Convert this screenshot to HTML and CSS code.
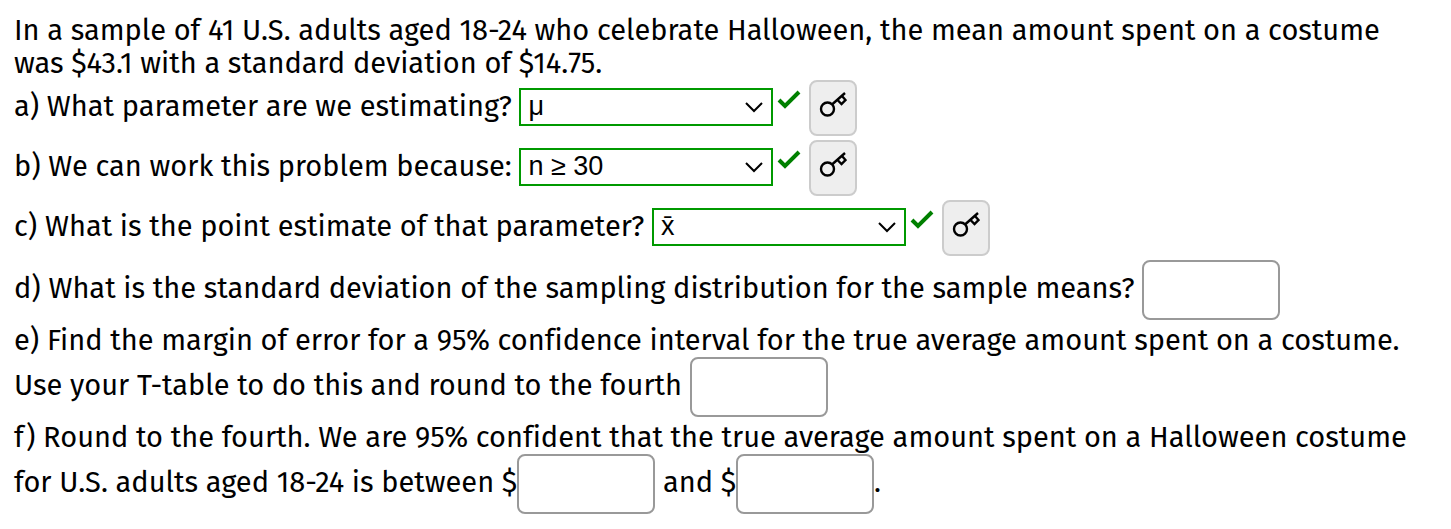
FILE: index.html
```html
<!DOCTYPE html>
<html lang="en">

<head>
    <meta charset="UTF-8">
    <meta name="viewport" content="width=device-width, initial-scale=1.0">
    <title>Halloween Costume Spending</title>
    <link rel="stylesheet" href="styles.css">
</head>

<body>
    <form class="question">
        <p class="intro">In a sample of 41 U.S. adults aged 18-24 who celebrate Halloween, the mean amount spent on a costume was $43.1 with a standard deviation of $14.75.</p>
        <div class="part">
            <label for="parameter">a) What parameter are we estimating?</label>
            <select id="parameter">
                <option>μ</option>
                <option>p</option>
            </select><svg class="check" viewBox="0 0 24 20" role="img" aria-label="Correct"><path d="M2 10l6 6L22 2"/></svg>
            <button type="button" class="key" aria-label="Show answer">
                <svg viewBox="0 0 28 28"><circle cx="8.500" cy="18" r="6.500"/><path d="M13 13.500L26 2M18.500 9l4 4 4-4-3.500-4"/></svg>
            </button>
        </div>
        <div class="part">
            <label for="reason">b) We can work this problem because:</label>
            <select id="reason">
                <option>n ≥ 30</option>
                <option>n &lt; 30</option>
            </select><svg class="check" viewBox="0 0 24 20" role="img" aria-label="Correct"><path d="M2 10l6 6L22 2"/></svg>
            <button type="button" class="key" aria-label="Show answer">
                <svg viewBox="0 0 28 28"><circle cx="8.500" cy="18" r="6.500"/><path d="M13 13.500L26 2M18.500 9l4 4 4-4-3.500-4"/></svg>
            </button>
        </div>
        <div class="part">
            <label for="estimate">c) What is the point estimate of that parameter?</label>
            <select id="estimate">
                <option>x̄</option>
                <option>p̂</option>
            </select><svg class="check" viewBox="0 0 24 20" role="img" aria-label="Correct"><path d="M2 10l6 6L22 2"/></svg>
            <button type="button" class="key" aria-label="Show answer">
                <svg viewBox="0 0 28 28"><circle cx="8.500" cy="18" r="6.500"/><path d="M13 13.500L26 2M18.500 9l4 4 4-4-3.500-4"/></svg>
            </button>
        </div>
        <div class="part">
            <label for="deviation">d) What is the standard deviation of the sampling distribution for the sample means?</label>
            <input type="text" id="deviation">
        </div>
        <div class="part">
            <label for="margin">e) Find the margin of error for a 95% confidence interval for the true average amount spent on a costume. Use your T-table to do this and round to the fourth</label>
            <input type="text" id="margin">
        </div>
        <div class="part">
            f) Round to the fourth. We are 95% confident that the true average amount spent on a Halloween costume
            <label for="lower">for U.S. adults aged 18-24 is between $</label><input type="text" id="lower">
            <label for="upper">and $</label><input type="text" id="upper">.
        </div>
    </form>
</body>

</html>
```

FILE: styles.css
```css
body {
    margin: 0;
    background-color: #fff;
}

.question {
    padding: 14px 30px 14px 14px;
    font-family: "Trebuchet MS", "Fira Sans", "Open Sans", sans-serif;
    font-size: 29px;
    font-variant-ligatures: none;
    line-height: 33px;
    color: #000;
}

.intro {
    margin: 0;
}

.part {
    margin-bottom: 4px;
}

select,
input,
.key {
    box-sizing: border-box;
    margin: 0;
    vertical-align: middle;
}

select {
    width: 254px;
    height: 38px;
    margin-bottom: 2px;
    padding: 0 8px 2px 7px;
    appearance: none;
    border: 2px solid #090;
    border-radius: 0;
    background: #fff url("data:image/svg+xml,%3Csvg xmlns='http://www.w3.org/2000/svg' width='18' height='12'%3E%3Cpath d='M1 2l8 8 8-8' fill='none' stroke='black' stroke-width='2'/%3E%3C/svg%3E") no-repeat right 8px center;
    font-family: "Liberation Sans", Arial, sans-serif;
    font-size: 27px;
    color: #000;
}

input {
    width: 138px;
    height: 60px;
    padding: 4px 12px;
    border: 2px solid #999;
    border-radius: 8px;
    font: inherit;
}

.check {
    width: 24px;
    height: 20px;
    margin: 0 0 16px 4px;
    vertical-align: middle;
    fill: none;
    stroke: #008000;
    stroke-width: 4;
}

.key {
    width: 48px;
    height: 56px;
    padding: 0 0 6px;
    border: 2px solid #ccc;
    border-radius: 8px;
    background-color: #eee;
    cursor: pointer;
}

.key svg {
    display: block;
    width: 28px;
    height: 28px;
    margin: 0 auto;
    fill: none;
    stroke: #000;
    stroke-width: 2.4;
}
```
